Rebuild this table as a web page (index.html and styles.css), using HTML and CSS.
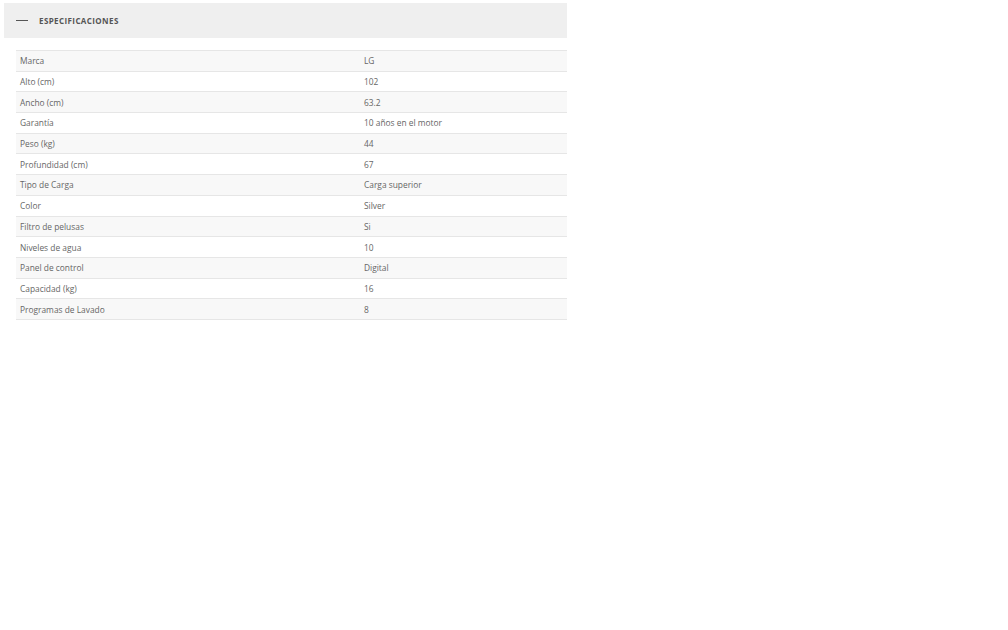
FILE: index.html
```html
<!DOCTYPE html>
<html lang="es">
<head>
<meta charset="utf-8">
<link rel="stylesheet" href="styles.css">
</head>
<body>
<div class="panel">
  <div class="panel-header">
    <span class="dash"></span>
    <span class="title">ESPECIFICACIONES</span>
  </div>
  <div class="panel-body">
    <table class="specs">
      <tr><td class="k">Marca</td><td>LG</td></tr>
      <tr><td class="k">Alto (cm)</td><td>102</td></tr>
      <tr><td class="k">Ancho (cm)</td><td>63.2</td></tr>
      <tr><td class="k">Garantía</td><td>10 años en el motor</td></tr>
      <tr><td class="k">Peso (kg)</td><td>44</td></tr>
      <tr><td class="k">Profundidad (cm)</td><td>67</td></tr>
      <tr><td class="k">Tipo de Carga</td><td>Carga superior</td></tr>
      <tr><td class="k">Color</td><td>Silver</td></tr>
      <tr><td class="k">Filtro de pelusas</td><td>Si</td></tr>
      <tr><td class="k">Niveles de agua</td><td>10</td></tr>
      <tr><td class="k">Panel de control</td><td>Digital</td></tr>
      <tr><td class="k">Capacidad (kg)</td><td>16</td></tr>
      <tr><td class="k">Programas de Lavado</td><td>8</td></tr>
    </table>
  </div>
</div>
</body>
</html>
```
FILE: styles.css
```css
html, body {
  margin: 0;
  padding: 0;
  background: #fff;
}
body {
  padding: 3px 0 0 4px;
  font-family: "Open Sans", "Liberation Sans", sans-serif;
  color: #666;
}
.panel {
  width: 563px;
}
.panel-header {
  height: 35px;
  background: #efefef;
  display: flex;
  align-items: center;
  padding-left: 12px;
}
.dash {
  display: inline-block;
  width: 12px;
  height: 1px;
  background: #555;
  margin-right: 11px;
}
.title {
  font-size: 8px;
  font-weight: 700;
  color: #555;
  letter-spacing: 0.4px;
}
.panel-body {
  padding: 12px 0 0 12px;
}
.specs {
  width: 551px;
  border-collapse: collapse;
  font-size: 8.4px;
  color: #666;
}
.specs td {
  height: 19.7px;
  padding: 0 4px;
  border-top: 1px solid #e6e6e6;
  border-bottom: 1px solid #e6e6e6;
  vertical-align: middle;
}
.specs td.k {
  width: 336px;
}
.specs tr:nth-child(odd) td {
  background: #f8f8f8;
}
```
